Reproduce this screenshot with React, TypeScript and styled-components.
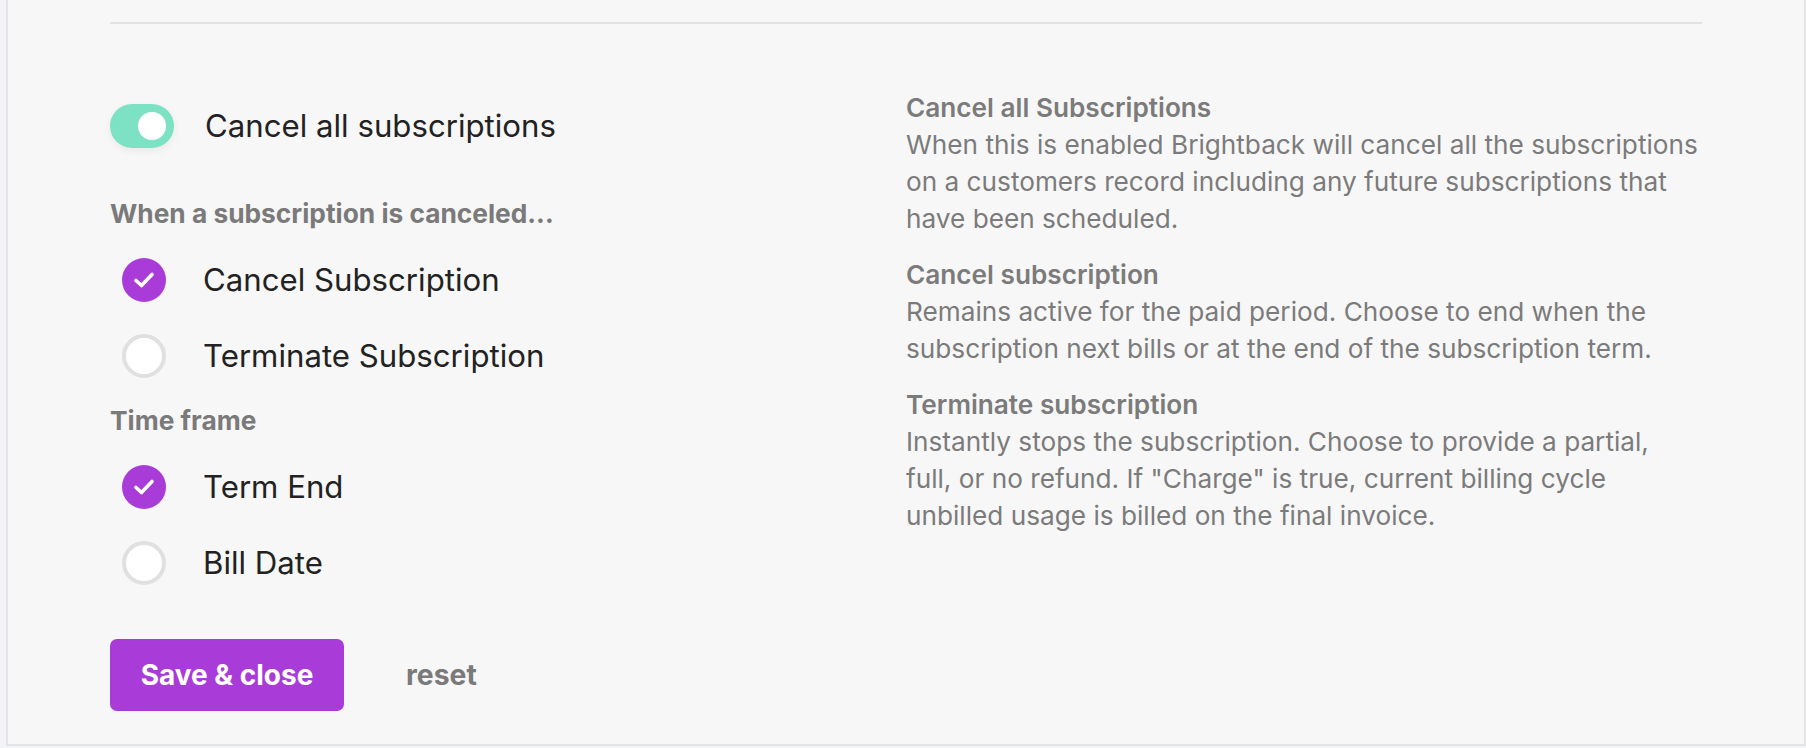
import React, { useState } from "react";
import styled, { createGlobalStyle } from "styled-components";

const GlobalStyle = createGlobalStyle`
  html, body {
    margin: 0;
    padding: 0;
    background: #f3f4f8;
    font-family: Inter, "Noto Sans", "Liberation Sans", sans-serif;
    -webkit-font-smoothing: antialiased;
  }
`;

const Page = styled.div`
  padding-left: 6px;
  height: 748px;
  overflow: hidden;
`;

const Panel = styled.div`
  box-sizing: border-box;
  height: 746px;
  background: #f7f7f7;
  border: 2px solid #e4e4e4;
  border-top: none;
  padding: 22px 102px 0 102px;
`;

const Divider = styled.hr`
  margin: 0;
  border: none;
  height: 2px;
  background: #e2e2e2;
`;

const Columns = styled.div`
  display: grid;
  grid-template-columns: 1fr 1fr;
  align-items: start;
`;

const LeftColumn = styled.div`
  display: flex;
  flex-direction: column;
  padding-top: 80px;
`;

const RightColumn = styled.div`
  display: flex;
  flex-direction: column;
  gap: 19px;
  padding-top: 65px;
`;

const ToggleRow = styled.label`
  display: flex;
  align-items: center;
  gap: 31px;
  height: 44px;
  cursor: pointer;
`;

const Track = styled.span<{ $on: boolean }>`
  box-sizing: border-box;
  display: flex;
  justify-content: ${(p) => (p.$on ? "flex-end" : "flex-start")};
  align-items: center;
  width: 64px;
  height: 44px;
  padding: 8px;
  border-radius: 22px;
  background: ${(p) => (p.$on ? "#7de2c3" : "#d9d9d9")};
  box-shadow: 0 3px 8px rgba(0, 0, 0, 0.06);
`;

const Knob = styled.span`
  width: 28px;
  height: 28px;
  border-radius: 50%;
  background: #ffffff;
`;

const OptionText = styled.span`
  font-size: 31.2px;
  line-height: 40px;
  color: #222222;
`;

const GroupLabel = styled.div<{ $top: number }>`
  margin-top: ${(p) => p.$top}px;
  font-size: 26.3px;
  line-height: 32px;
  font-weight: 700;
  color: #7a7a7a;
`;

const RadioList = styled.div`
  display: flex;
  flex-direction: column;
  gap: 32px;
  margin-top: 28px;
`;

const RadioRow = styled.label`
  display: flex;
  align-items: center;
  gap: 37px;
  height: 44px;
  padding-left: 12px;
  cursor: pointer;
`;

const RadioDot = styled.span<{ $checked: boolean }>`
  box-sizing: border-box;
  display: flex;
  align-items: center;
  justify-content: center;
  width: 44px;
  height: 44px;
  border-radius: 50%;
  background: ${(p) => (p.$checked ? "#a93bd9" : "#ffffff")};
  border: ${(p) => (p.$checked ? "none" : "4px solid #e0e0e0")};
`;

const Actions = styled.div`
  display: flex;
  align-items: center;
  gap: 62px;
  margin-top: 54px;
`;

const SaveButton = styled.button`
  width: 234px;
  height: 72px;
  border: none;
  border-radius: 7px;
  background: #a93bd9;
  color: #ffffff;
  font-family: inherit;
  font-size: 28px;
  font-weight: 700;
  cursor: pointer;
`;

const ResetLink = styled.button`
  border: none;
  background: none;
  padding: 0;
  font-family: inherit;
  font-size: 28.3px;
  font-weight: 700;
  color: #7a7a7a;
  cursor: pointer;
`;

const HelpBlock = styled.div`
  display: flex;
  flex-direction: column;
  color: #7b7b7b;
  font-size: 26.2px;
  line-height: 37px;
`;

const HelpTitle = styled.div`
  font-weight: 600;
`;

const HelpBody = styled.div<{ $width: number }>`
  max-width: ${(p) => p.$width}px;
`;

const Check = () => (
  <svg width="24" height="20" viewBox="0 0 24 20" fill="none">
    <path
      d="M4 10.5 L9.5 15.5 L20 4.5"
      stroke="#ffffff"
      strokeWidth="3.6"
      strokeLinecap="round"
      strokeLinejoin="round"
    />
  </svg>
);

type RadioProps = {
  label: string;
  checked: boolean;
  onSelect: () => void;
};

const Radio = ({ label, checked, onSelect }: RadioProps) => (
  <RadioRow onClick={onSelect}>
    <RadioDot $checked={checked}>{checked && <Check />}</RadioDot>
    <OptionText>{label}</OptionText>
  </RadioRow>
);

const help = [
  {
    title: "Cancel all Subscriptions",
    body: "When this is enabled Brightback will cancel all the subscriptions on a customers record including any future subscriptions that have been scheduled.",
    width: 796,
  },
  {
    title: "Cancel subscription",
    body: "Remains active for the paid period. Choose to end when the subscription next bills or at the end of the subscription term.",
    width: 796,
  },
  {
    title: "Terminate subscription",
    body: 'Instantly stops the subscription. Choose to provide a partial, full, or no refund. If "Charge" is true, current billing cycle unbilled usage is billed on the final invoice.',
    width: 770,
  },
];

const App = (): React.ReactElement => {
  const [cancelAll, setCancelAll] = useState(true);
  const [mode, setMode] = useState("cancel");
  const [timeframe, setTimeframe] = useState("term");

  return (
    <Page>
      <GlobalStyle />
      <Panel>
        <Divider />
        <Columns>
          <LeftColumn>
            <ToggleRow onClick={() => setCancelAll(!cancelAll)}>
              <Track $on={cancelAll}>
                <Knob />
              </Track>
              <OptionText>Cancel all subscriptions</OptionText>
            </ToggleRow>

            <GroupLabel $top={50}>When a subscription is canceled...</GroupLabel>
            <RadioList>
              <Radio
                label="Cancel Subscription"
                checked={mode === "cancel"}
                onSelect={() => setMode("cancel")}
              />
              <Radio
                label="Terminate Subscription"
                checked={mode === "terminate"}
                onSelect={() => setMode("terminate")}
              />
            </RadioList>

            <GroupLabel $top={27}>Time frame</GroupLabel>
            <RadioList>
              <Radio
                label="Term End"
                checked={timeframe === "term"}
                onSelect={() => setTimeframe("term")}
              />
              <Radio
                label="Bill Date"
                checked={timeframe === "bill"}
                onSelect={() => setTimeframe("bill")}
              />
            </RadioList>

            <Actions>
              <SaveButton>Save &amp; close</SaveButton>
              <ResetLink>reset</ResetLink>
            </Actions>
          </LeftColumn>

          <RightColumn>
            {help.map((h) => (
              <HelpBlock key={h.title}>
                <HelpTitle>{h.title}</HelpTitle>
                <HelpBody $width={h.width}>{h.body}</HelpBody>
              </HelpBlock>
            ))}
          </RightColumn>
        </Columns>
      </Panel>
    </Page>
  );
};

export default App;
